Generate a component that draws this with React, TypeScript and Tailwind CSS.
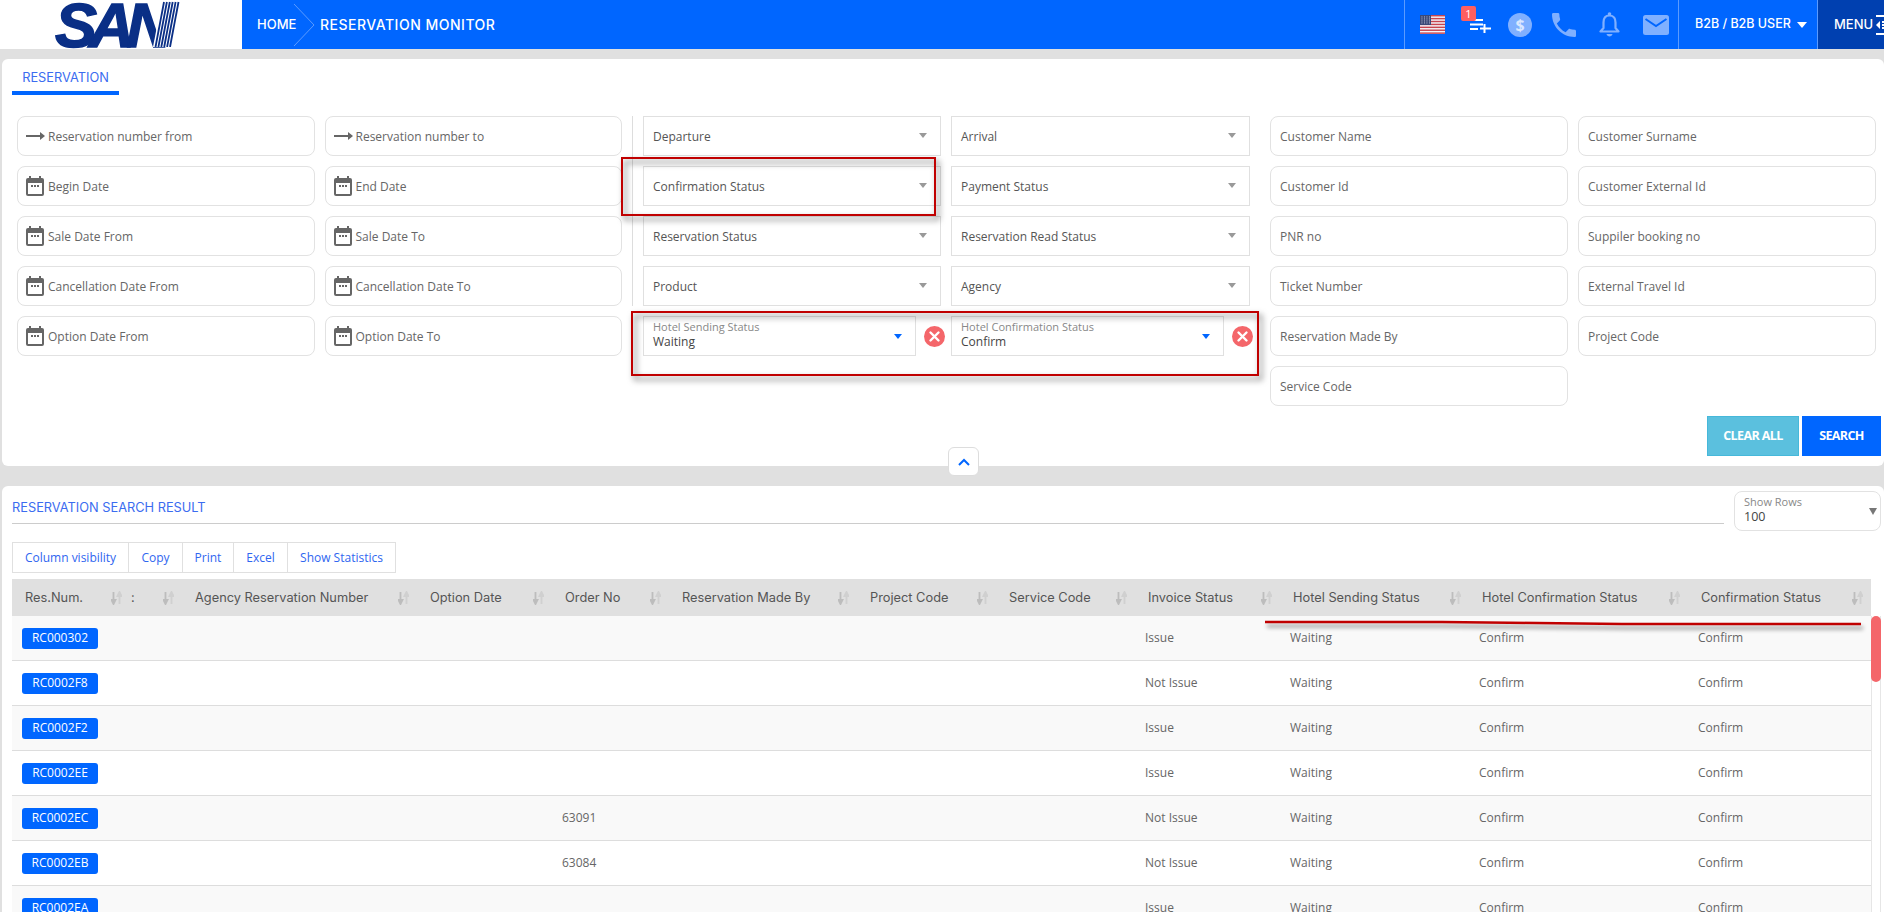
import React from "react";

const OPEN = "font-['Open_Sans','Noto_Sans',sans-serif]";
const MONT = "font-['Inter','Liberation_Sans',sans-serif]";

function ArrowIcon() {
  return (
    <svg width="19" height="10" viewBox="0 0 19 10" className="shrink-0">
      <rect x="0" y="4" width="15" height="2" fill="#666" />
      <path d="M14 1 L19 5 L14 9 Z" fill="#666" />
    </svg>
  );
}

function CalIcon() {
  return (
    <svg width="18" height="20" viewBox="0 0 18 20" className="shrink-0">
      <rect x="3" y="0" width="2" height="4" fill="#666" />
      <rect x="13" y="0" width="2" height="4" fill="#666" />
      <rect x="0" y="2" width="18" height="18" rx="2" fill="#666" />
      <rect x="2" y="7" width="14" height="11" fill="#fff" />
      <rect x="5" y="9" width="2" height="2" fill="#666" />
      <rect x="8" y="9" width="2" height="2" fill="#666" />
      <rect x="11" y="9" width="2" height="2" fill="#666" />
    </svg>
  );
}

function Field({ label, icon }: { label: string; icon?: "arrow" | "cal" }) {
  return (
    <div className={`h-10 rounded-lg border border-[#e2e2e2] bg-white flex items-center text-[12px] text-[#666] ${icon ? "pl-2" : "pl-[9px]"} ${OPEN}`}>
      {icon === "arrow" && <ArrowIcon />}
      {icon === "cal" && <CalIcon />}
      <span className={`pt-[2px] ${icon === "cal" ? "ml-[4px]" : icon === "arrow" ? "ml-[3px]" : ""}`}>{label}</span>
    </div>
  );
}

function Select({ label }: { label: string }) {
  return (
    <div className={`h-10 border border-[#e0e0e0] bg-white flex items-center justify-between pl-[9px] pr-[13px] text-[12px] text-[#555] ${OPEN}`}>
      <span className="pt-[2px]">{label}</span>
      <span className="w-0 h-0 border-x-[4px] border-x-transparent border-t-[5px] border-t-[#999] mb-[2px]" />
    </div>
  );
}

function HotelSelect({ label, value, widthClass }: { label: string; value: string; widthClass: string }) {
  return (
    <div className={`h-10 border border-[#e0e0e0] bg-white flex items-center justify-between pl-[9px] pr-[13px] ${widthClass} ${OPEN}`}>
      <div className="flex flex-col mb-[4px]">
        <span className="text-[11px] leading-[15px] text-[#888]">{label}</span>
        <span className="text-[12px] leading-[15px] text-[#444]">{value}</span>
      </div>
      <span className="w-0 h-0 border-x-[4px] border-x-transparent border-t-[5px] border-t-[#0066ff]" />
    </div>
  );
}

function XCircle() {
  return (
    <svg width="21" height="21" viewBox="0 0 21 21" className="shrink-0">
      <circle cx="10.5" cy="10.5" r="10.5" fill="#f4666a" />
      <path d="M6.5 6.5 L14.5 14.5 M14.5 6.5 L6.5 14.5" stroke="#fff" strokeWidth="2.4" strokeLinecap="round" />
    </svg>
  );
}

function SortIcon() {
  return (
    <svg width="11" height="14" viewBox="0 0 11 14" className="absolute top-1/2 -translate-y-1/2 right-[8px]">
      <path d="M2.5 1 V10 M0.5 9 L2.5 13 L4.5 9 Z" stroke="#bdbdbd" strokeWidth="1.8" fill="#bdbdbd" />
      <path d="M8.5 13 V4 M6.5 5 L8.5 1 L10.5 5 Z" stroke="#d0d0d0" strokeWidth="1.8" fill="#d0d0d0" />
    </svg>
  );
}

const HEAD = [
  { t: "Res.Num.", w: "w-[118px]", pl: "pl-[13px]" },
  { t: ":", w: "w-[52px]", pl: "pl-px" },
  { t: "Agency Reservation Number", w: "w-[235px]", pl: "pl-[13px]" },
  { t: "Option Date", w: "w-[135px]", pl: "pl-[13px]" },
  { t: "Order No", w: "w-[117px]", pl: "pl-[13px]" },
  { t: "Reservation Made By", w: "w-[188px]", pl: "pl-[13px]" },
  { t: "Project Code", w: "w-[139px]", pl: "pl-[13px]" },
  { t: "Service Code", w: "w-[139px]", pl: "pl-[13px]" },
  { t: "Invoice Status", w: "w-[145px]", pl: "pl-[13px]" },
  { t: "Hotel Sending Status", w: "w-[189px]", pl: "pl-[13px]" },
  { t: "Hotel Confirmation Status", w: "w-[219px]", pl: "pl-[13px]" },
  { t: "Confirmation Status", w: "w-[183px]", pl: "pl-[13px]" },
];

const ROWS = [
  { id: "RC000302", order: "", inv: "Issue" },
  { id: "RC0002F8", order: "", inv: "Not Issue" },
  { id: "RC0002F2", order: "", inv: "Issue" },
  { id: "RC0002EE", order: "", inv: "Issue" },
  { id: "RC0002EC", order: "63091", inv: "Not Issue" },
  { id: "RC0002EB", order: "63084", inv: "Not Issue" },
  { id: "RC0002EA", order: "", inv: "Issue" },
];

function Flag() {
  const stripes = [0, 1, 2, 3, 4, 5, 6];
  return (
    <svg width="25" height="19" viewBox="0 0 25 19" className="shrink-0">
      <rect width="25" height="19" fill="#f4f4f8" />
      {stripes.map((i) => (
        <rect key={i} y={i * 2.9} width="25" height="1.45" fill="#c8454f" />
      ))}
      <rect width="11" height="10" fill="#3b4a78" />
      {[1.5, 4, 6.5, 9].map((x) =>
        [1.5, 3.5, 5.5, 7.5].map((y) => <rect key={`${x}-${y}`} x={x} y={y} width="0.9" height="0.9" fill="#d5d8e6" />)
      )}
    </svg>
  );
}

export default function App() {
  return (
    <div className="relative w-[1884px] h-[912px] overflow-hidden bg-[#e0e0e0]">
      {/* Header */}
      <header className="flex h-[49px]">
        <div className="relative w-[242px] bg-white overflow-hidden">
          <span className="absolute left-[55px] top-[-10px] text-[63px] leading-[70px] font-bold italic text-[#0a2f86] tracking-[-8px] font-['Liberation_Sans',sans-serif] [-webkit-text-stroke:1.5px_#0a2f86]">
            SAN
          </span>
          <svg width="44" height="47" viewBox="0 0 44 47" className="absolute left-[146px] top-0">
            <path d="M16 0 H44 V47 H7 Z" fill="#fff" />
            {[0, 1, 2, 3, 4, 5].map((i) => (
              <path key={i} d={`M${18 + i * 2.9} 2 L${9.5 + i * 2.9} 47`} stroke="#0a2f86" strokeWidth="1.8" />
            ))}
          </svg>
        </div>
        <div className="flex-1 flex bg-[#0066ff] text-white">
          <div className={`flex items-center flex-1 pl-[15px] ${MONT}`}>
            <span className="text-[13px] font-medium w-[36px] whitespace-nowrap">HOME</span>
            <svg width="22" height="42" viewBox="0 0 22 42" className="shrink-0">
              <path d="M1 0 L21 21 L1 42" fill="none" stroke="#5b9bff" strokeWidth="1" />
            </svg>
            <span className="text-[14px] font-medium ml-[5px] whitespace-nowrap tracking-[0.5px]">RESERVATION MONITOR</span>
          </div>
          <div className="w-[274px] border-l border-[#5b9bff] flex items-center">
            <div className="ml-[15px]"><Flag /></div>
            <div className="relative ml-[25px] w-[21px] h-[14px] mt-[3px]">
              <span className={`absolute left-[-9px] top-[-13px] w-[15px] h-[15px] rounded-[2px] bg-[#ff5f5f] text-[11px] leading-[15px] text-center text-white ${OPEN}`}>1</span>
              <svg width="21" height="14" viewBox="0 0 21 14" className="block">
                <path d="M0 1 H13 M0 5.5 H13 M0 10 H8 M14.5 5 V14 M10 9.5 H21" stroke="#fff" strokeWidth="2" />
              </svg>
            </div>
            <svg width="24" height="24" viewBox="0 0 24 24" className="ml-[17px] shrink-0">
              <circle cx="12" cy="12" r="12" fill="#80b0ff" />
              <text x="12" y="17.5" textAnchor="middle" fontSize="16" fontWeight="700" fill="#dbe8ff" fontFamily="Open Sans, sans-serif">$</text>
            </svg>
            <svg width="24" height="24" viewBox="3 3 18 18" className="ml-[20px] shrink-0">
              <path fill="#80b0ff" d="M6.62 10.79c1.44 2.83 3.76 5.14 6.59 6.59l2.2-2.2c.27-.27.67-.36 1.02-.24 1.12.37 2.33.57 3.57.57.55 0 1 .45 1 1V20c0 .55-.45 1-1 1-9.39 0-17-7.61-17-17 0-.55.45-1 1-1h3.5c.55 0 1 .45 1 1 0 1.25.2 2.45.57 3.57.11.35.03.74-.25 1.02l-2.2 2.2z" />
            </svg>
            <svg width="21" height="25" viewBox="0 0 21 25" className="ml-[23px] shrink-0">
              <path d="M10.5 3.5 C6 3.5 4.5 7 4.5 10.5 V16 L1.5 19.5 H19.5 L16.5 16 V10.5 C16.5 7 15 3.5 10.5 3.5 Z" fill="none" stroke="#80b0ff" strokeWidth="2.2" strokeLinejoin="round" />
              <circle cx="10.5" cy="2" r="1.8" fill="#80b0ff" />
              <path d="M7.5 22 H13.5 C13 25.3 8 25.3 7.5 22 Z" fill="#80b0ff" />
            </svg>
            <svg width="26" height="20" viewBox="0 0 26 20" className="ml-[23px] shrink-0">
              <rect width="26" height="20" rx="2.5" fill="#80b0ff" />
              <path d="M2.5 4 L13 11 L23.5 4" fill="none" stroke="#0066ff" strokeWidth="2" />
            </svg>
          </div>
          <div className={`w-[139px] border-l border-[#5b9bff] flex items-center pl-4 text-[12.5px] font-medium whitespace-nowrap ${MONT}`}>
            <span>B2B / B2B USER</span>
            <span className="ml-[6px] w-0 h-0 border-x-[5.5px] border-x-transparent border-t-[6px] border-t-white" />
          </div>
          <div className={`w-[67px] border-l border-[#5b9bff] bg-[#0040b0] flex items-center pl-4 overflow-hidden text-[13px] font-medium ${MONT}`}>
            <span>MENU</span>
            <svg width="16" height="20" viewBox="0 0 16 20" className="ml-[3px] shrink-0">
              <path d="M0 1 H16 M0 19 H16 M6 7 H16 M6 10 H16 M6 13 H16" stroke="#fff" strokeWidth="2" />
              <path d="M4 6 V14 L0 10 Z" fill="#fff" />
            </svg>
          </div>
        </div>
      </header>

      {/* Search panel */}
      <section className="relative ml-[2px] mt-[10px] h-[407px] rounded-[6px] bg-white">
        <div className="pl-[10px] h-[36px]">
          <div className={`w-[107px] h-[36px] border-b-4 border-[#0066ff] text-center text-[12.8px] leading-[37px] text-[#3b6cf0] ${MONT}`}>
            RESERVATION
          </div>
        </div>
        <div className="flex pl-[15px] mt-[21px]">
          <div className="w-[605px] grid grid-cols-2 gap-[10px] content-start">
            <Field label="Reservation number from" icon="arrow" />
            <Field label="Reservation number to" icon="arrow" />
            <Field label="Begin Date" icon="cal" />
            <Field label="End Date" icon="cal" />
            <Field label="Sale Date From" icon="cal" />
            <Field label="Sale Date To" icon="cal" />
            <Field label="Cancellation Date From" icon="cal" />
            <Field label="Cancellation Date To" icon="cal" />
            <Field label="Option Date From" icon="cal" />
            <Field label="Option Date To" icon="cal" />
          </div>
          <div className="ml-[10px] w-[618px] pl-[10px] h-[190px] border-l border-[#ddd]">
            <div className="grid grid-cols-[297.5px_299px] gap-x-[10.5px] gap-y-[10px] w-[607px]">
              <Select label="Departure" />
              <Select label="Arrival" />
              <Select label="Confirmation Status" />
              <Select label="Payment Status" />
              <Select label="Reservation Status" />
              <Select label="Reservation Read Status" />
              <Select label="Product" />
              <Select label="Agency" />
            </div>
          </div>
          <div className="ml-[20px] w-[606px] grid grid-cols-2 gap-[10px]">
            <Field label="Customer Name" />
            <Field label="Customer Surname" />
            <Field label="Customer Id" />
            <Field label="Customer External Id" />
            <Field label="PNR no" />
            <Field label="Suppiler booking no" />
            <Field label="Ticket Number" />
            <Field label="External Travel Id" />
            <Field label="Reservation Made By" />
            <Field label="Project Code" />
            <Field label="Service Code" />
          </div>
        </div>
        {/* Hotel status row sits beneath the selects */}
        <div className="absolute left-[641px] top-[257px] flex items-center">
          <HotelSelect label="Hotel Sending Status" value="Waiting" widthClass="w-[273px]" />
          <div className="ml-[8px]"><XCircle /></div>
          <div className="ml-[6px]"><HotelSelect label="Hotel Confirmation Status" value="Confirm" widthClass="w-[273px]" /></div>
          <div className="ml-[8px]"><XCircle /></div>
        </div>
        <div className={`flex justify-end gap-[3px] pr-[3px] mt-[10px] text-white text-[12.5px] font-bold tracking-[-0.6px] ${OPEN}`}>
          <button className="w-[92px] h-10 bg-[#5bc0de] border border-[#46b8da]">CLEAR ALL</button>
          <button className="w-[79px] h-10 bg-[#0066ff]">SEARCH</button>
        </div>
        {/* Collapse toggle */}
        <button className="absolute left-[946px] top-[388px] w-[31px] h-[29px] bg-white border border-[#ddd] rounded-[6px] flex items-center justify-center">
          <svg width="12" height="8" viewBox="0 0 12 8">
            <path d="M1 7 L6 2 L11 7" fill="none" stroke="#0066ff" strokeWidth="2" />
          </svg>
        </button>
        {/* Red annotation rectangles */}
        <div className="absolute left-[619px] top-[98px] w-[315px] h-[59px] border-2 border-[#c00000] [filter:drop-shadow(3px_4px_3px_rgba(0,0,0,0.6))]" />
        <div className="absolute left-[629px] top-[252px] w-[628px] h-[65px] border-2 border-[#c00000] [filter:drop-shadow(3px_4px_3px_rgba(0,0,0,0.6))]" />
      </section>

      {/* Results panel */}
      <section className="ml-[2px] mt-[20px] h-[426px] rounded-t-[6px] bg-white pl-[10px] relative overflow-hidden">
        <div className="flex pt-[5px]">
          <div className={`w-[1712px] h-[33px] border-b border-[#ccc] text-[12.8px] leading-[34px] text-[#3b6cf0] ${MONT}`}>
            RESERVATION SEARCH RESULT
          </div>
          <div className={`ml-[10px] w-[147px] h-10 rounded-lg border border-[#e2e2e2] flex items-center justify-between pl-[9px] pr-[3px] ${OPEN}`}>
            <div className="flex flex-col mb-[4px]">
              <span className="text-[11px] leading-[15px] text-[#888]">Show Rows</span>
              <span className="text-[12.5px] leading-[15px] text-[#444]">100</span>
            </div>
            <span className="w-0 h-0 border-x-[4px] border-x-transparent border-t-[7px] border-t-[#777]" />
          </div>
        </div>
        <div className={`mt-[11px] inline-flex h-[31px] border border-[#e0e0e0] text-[12px] text-[#2f66f0] align-top ${OPEN}`}>
          {[
            ["Column visibility", "w-[115px]"],
            ["Copy", "w-[54px]"],
            ["Print", "w-[51px]"],
            ["Excel", "w-[54px]"],
            ["Show Statistics", "w-[108px]"],
          ].map(([t, w], i) => (
            <div key={t} className={`${w} flex items-center justify-center ${i ? "border-l border-[#e0e0e0]" : ""}`}>{t}</div>
          ))}
        </div>
        <div className="mt-[6px] flex items-start">
          <table className="table-fixed w-[1859px] border-separate border-spacing-0 shrink-0">
            <thead>
              <tr className="h-[37px] bg-[#e0e0e0]">
                {HEAD.map((h, i) => (
                  <th key={i} className={`${h.w} ${h.pl} relative text-left font-normal text-[12.8px] text-[#555] whitespace-nowrap ${MONT}`}>
                    {h.t}
                    <SortIcon />
                  </th>
                ))}
              </tr>
            </thead>
            <tbody className={`text-[12px] text-[#666] ${OPEN}`}>
              {ROWS.map((r, i) => (
                <tr key={r.id} className={`h-[45px] [&>td]:border-b [&>td]:border-[#ddd] ${i % 2 === 0 ? "bg-[#f9f9f9]" : "bg-white"}`}>
                  <td className="pl-[10px]">
                    <span className="inline-flex items-center justify-center w-[76px] h-[21px] rounded-[3px] bg-[#0066ff] text-white text-[12px] align-middle">{r.id}</span>
                  </td>
                  <td />
                  <td />
                  <td />
                  <td className="pl-[10px]">{r.order}</td>
                  <td />
                  <td />
                  <td />
                  <td className="pl-[10px]">{r.inv}</td>
                  <td className="pl-[10px]">Waiting</td>
                  <td className="pl-[10px]">Confirm</td>
                  <td className="pl-[10px]">Confirm</td>
                </tr>
              ))}
            </tbody>
          </table>
          <div className="mt-[37px] w-[10px] h-[400px] border-x border-[#e6e6e6] bg-white">
            <div className="-mx-px w-[10px] h-[66px] rounded-[5px] bg-[#f4666a]" />
          </div>
        </div>
      </section>

      {/* Hand drawn red underline */}
      <svg width="610" height="14" viewBox="0 0 610 14" className="absolute left-[1262px] top-[618px] [filter:drop-shadow(2px_4px_2px_rgba(0,0,0,0.45))]">
        <path d="M3 4 L180 4 L360 6 L599 6" fill="none" stroke="#c00000" strokeWidth="2.5" />
      </svg>
    </div>
  );
}
